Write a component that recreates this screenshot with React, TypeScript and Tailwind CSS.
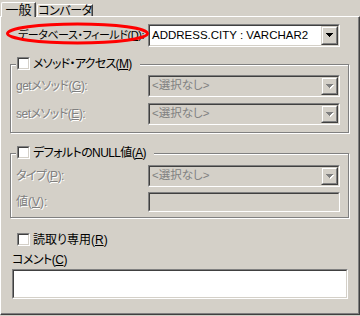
import React from "react";

function Arrow({ disabled }: { disabled?: boolean }) {
  const c = disabled ? "#808080" : "#000";
  return (
    <svg width="8" height="5" viewBox="0 0 8 5" className="block" shapeRendering="crispEdges">
      {disabled && (
        <g fill="#fff">
          <rect x="1" y="1" width="7" height="1" />
          <rect x="2" y="2" width="5" height="1" />
          <rect x="3" y="3" width="3" height="1" />
          <rect x="4" y="4" width="1" height="1" />
        </g>
      )}
      <g fill={c}>
        <rect x="0" y="0" width="7" height="1" />
        <rect x="1" y="1" width="5" height="1" />
        <rect x="2" y="2" width="3" height="1" />
        <rect x="3" y="3" width="1" height="1" />
      </g>
    </svg>
  );
}

function Sunken({
  className,
  inner,
  children,
}: {
  className: string;
  inner: string;
  children?: React.ReactNode;
}) {
  return (
    <div
      className={
        "border border-t-[#808080] border-l-[#808080] border-r-white border-b-white " + className
      }
    >
      <div
        className={
          "h-full w-full border border-t-[#404040] border-l-[#404040] border-r-[#d4d0c8] border-b-[#d4d0c8] " +
          inner
        }
      >
        {children}
      </div>
    </div>
  );
}

function DropButton({ disabled }: { disabled?: boolean }) {
  return (
    <div className="w-[17px] h-full border border-t-[#d4d0c8] border-l-[#d4d0c8] border-r-[#404040] border-b-[#404040]">
      <div className="w-full h-full border border-t-white border-l-white border-r-[#808080] border-b-[#808080] bg-[#d4d0c8] flex items-center justify-center">
        <Arrow disabled={disabled} />
      </div>
    </div>
  );
}

function Combo({ value, disabled, h }: { value: string; disabled?: boolean; h: string }) {
  return (
    <Sunken
      className={"w-[192px] " + h}
      inner={"flex items-stretch " + (disabled ? "bg-[#d4d0c8]" : "bg-white")}
    >
      <div
        className={
          "flex-1 flex items-center pl-[2px] text-[11.5px] whitespace-nowrap overflow-hidden " +
          (disabled ? "text-[#808080]" : "text-black")
        }
      >
        {value}
      </div>
      <DropButton disabled={disabled} />
    </Sunken>
  );
}

function CheckBox() {
  return <Sunken className="w-[13px] h-[13px] shrink-0" inner="bg-white" />;
}

function U({ children }: { children: React.ReactNode }) {
  return <span className="underline underline-offset-[1px]">{children}</span>;
}

function Dis({ children }: { children: React.ReactNode }) {
  return <span className="text-[#808080] [text-shadow:1px_1px_0_#fff]">{children}</span>;
}

export default function App() {
  return (
    <div className="w-[360px] h-[316px] bg-[#d4d0c8] relative overflow-hidden text-[12px] leading-none text-black [font-family:'Liberation_Sans','Noto_Sans_CJK_JP',sans-serif] [font-feature-settings:'palt']">
      {/* tabs */}
      <div className="flex items-end h-[16px] pl-[1px] gap-[1px] relative z-10">
        <div className="h-[15px] w-[35px] mb-[-1px] bg-[#d4d0c8] border-t border-l border-t-white border-l-white border-r border-r-[#404040] rounded-tl-[2px] shadow-[inset_-1px_0_0_#808080] flex items-center justify-center pb-[1px] text-[13px]">
          一般
        </div>
        <div className="h-[12px] w-[56px] border-t border-l border-t-white border-l-white border-r border-r-[#404040] rounded-tl-[2px] shadow-[inset_-1px_0_0_#808080] flex items-center justify-center tracking-[-0.5px]">
          コンバータ
        </div>
      </div>

      {/* panel */}
      <div className="h-[299px] border-t border-l border-t-white border-l-white border-r border-b border-r-[#404040] border-b-[#404040] shadow-[inset_-1px_-1px_0_#808080] flex flex-col">
        {/* row 1 */}
        <div className="mt-[7px] h-[23px] flex items-center">
          <div className="w-[147px] pl-[17px] whitespace-nowrap text-[11px] tracking-[-0.45px]">
            データベース・フィールド(<U>D</U>):
          </div>
          <Combo value="ADDRESS.CITY : VARCHAR2" h="h-[23px]" />
        </div>

        {/* group 1 */}
        <div className="relative mt-[17px] ml-[9px] w-[339px] h-[69px] border border-[#808080] shadow-[inset_1px_1px_0_#fff,1px_1px_0_#fff] flex flex-col">
          <div className="absolute left-[5px] top-[-8px] h-[13px] pl-[1px] pr-[8px] bg-[#d4d0c8] flex items-center gap-[3px] whitespace-nowrap">
            <CheckBox />
            <span className="tracking-[-0.7px]">
              メソッド・アクセス(<U>M</U>)
            </span>
          </div>
          <div className="mt-[10px] h-[22px] flex items-center">
            <div className="w-[137px] pl-[5px] whitespace-nowrap tracking-[-0.5px]">
              <Dis>
                getメソッド(<U>G</U>):
              </Dis>
            </div>
            <Combo value="<選択なし>" disabled h="h-[22px]" />
          </div>
          <div className="mt-[6px] h-[22px] flex items-center">
            <div className="w-[137px] pl-[5px] whitespace-nowrap tracking-[-0.5px]">
              <Dis>
                setメソッド(<U>E</U>):
              </Dis>
            </div>
            <Combo value="<選択なし>" disabled h="h-[22px]" />
          </div>
        </div>

        {/* group 2 */}
        <div className="relative mt-[20px] ml-[9px] w-[339px] h-[65px] border border-[#808080] shadow-[inset_1px_1px_0_#fff,1px_1px_0_#fff] flex flex-col">
          <div className="absolute left-[5px] top-[-8px] h-[13px] pl-[1px] pr-[8px] bg-[#d4d0c8] flex items-center gap-[3px] whitespace-nowrap">
            <CheckBox />
            <span className="tracking-[-0.6px]">
              デフォルトのNULL値(<U>A</U>)
            </span>
          </div>
          <div className="mt-[11px] h-[22px] flex items-center">
            <div className="w-[137px] pl-[5px] whitespace-nowrap tracking-[-0.5px]">
              <Dis>
                タイプ(<U>P</U>):
              </Dis>
            </div>
            <Combo value="<選択なし>" disabled h="h-[22px]" />
          </div>
          <div className="mt-[5px] h-[20px] flex items-center">
            <div className="w-[137px] pl-[5px] whitespace-nowrap">
              <Dis>
                値(<U>V</U>):
              </Dis>
            </div>
            <Sunken className="w-[192px] h-[20px]" inner="bg-[#d4d0c8]" />
          </div>
        </div>

        {/* read only */}
        <div className="mt-[15px] h-[13px] pl-[16px] flex items-center gap-[3px] whitespace-nowrap">
          <CheckBox />
          <span>
            読取り専用(<U>R</U>)
          </span>
        </div>

        {/* comment */}
        <div className="mt-[7px] h-[13px] pl-[11px] flex items-center whitespace-nowrap tracking-[-0.5px]">
          コメント(<U>C</U>)
        </div>
        <Sunken className="mt-[3px] ml-[11px] w-[336px] h-[30px]" inner="bg-white" />
      </div>

      {/* red annotation ellipse */}
      <svg
        className="absolute left-0 top-0 pointer-events-none"
        width="360"
        height="316"
        viewBox="0 0 360 316"
      >
        <ellipse cx="77.5" cy="33.5" rx="70" ry="9.5" fill="none" stroke="#ff0000" strokeWidth="3" />
      </svg>
    </div>
  );
}
